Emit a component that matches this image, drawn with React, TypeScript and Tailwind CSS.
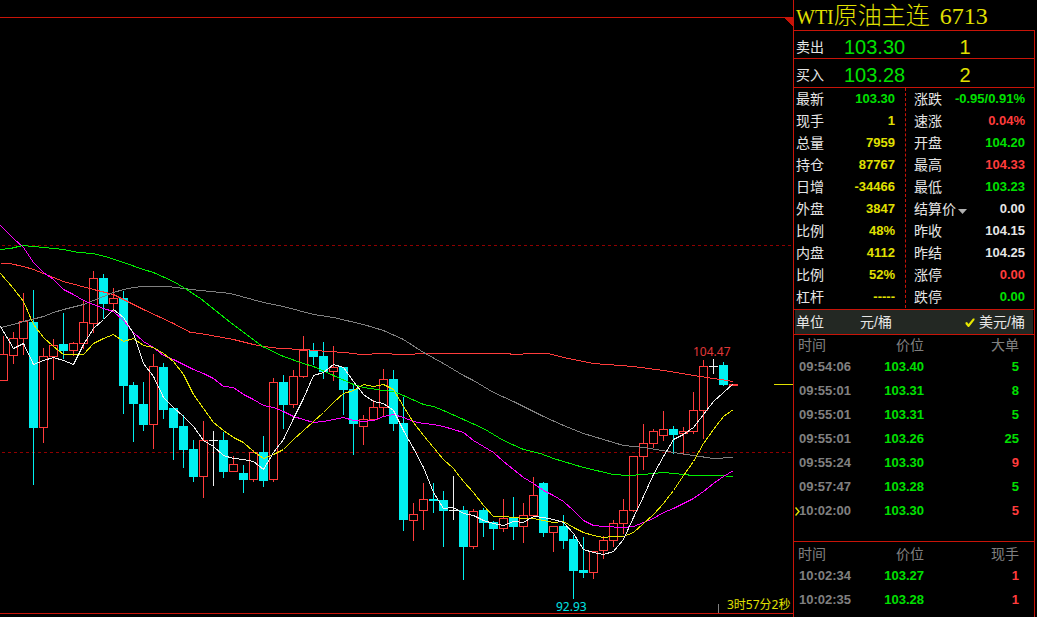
import { useState } from "react";
import clsx from "clsx";

type Tone = "up" | "down" | "flat" | "info";

type Quote = {
  label: string;
  value: string;
  tone: Tone;
  menu?: boolean;
};

type Trade = {
  time: string;
  price: string;
  volume: string;
  tone: Tone;
  marked?: boolean;
};

// [x, high, bodyTop, bodyBottom, low, kind]
type Candle = [number, number, number, number, number, "r" | "c" | "w"];

const toneClass: Record<Tone, string> = {
  up: "text-[#ff3c3c]",
  down: "text-[#00e000]",
  flat: "text-[#e6e6e6]",
  info: "text-[#e0e000]",
};

const leftQuotes: Quote[] = [
  { label: "最新", value: "103.30", tone: "down" },
  { label: "现手", value: "1", tone: "info" },
  { label: "总量", value: "7959", tone: "info" },
  { label: "持仓", value: "87767", tone: "info" },
  { label: "日增", value: "-34466", tone: "info" },
  { label: "外盘", value: "3847", tone: "info" },
  { label: "比例", value: "48%", tone: "info" },
  { label: "内盘", value: "4112", tone: "info" },
  { label: "比例", value: "52%", tone: "info" },
  { label: "杠杆", value: "-----", tone: "info" },
];

const rightQuotes: Quote[] = [
  { label: "涨跌", value: "-0.95/0.91%", tone: "down" },
  { label: "速涨", value: "0.04%", tone: "up" },
  { label: "开盘", value: "104.20", tone: "down" },
  { label: "最高", value: "104.33", tone: "up" },
  { label: "最低", value: "103.23", tone: "down" },
  { label: "结算价", value: "0.00", tone: "flat", menu: true },
  { label: "昨收", value: "104.15", tone: "flat" },
  { label: "昨结", value: "104.25", tone: "flat" },
  { label: "涨停", value: "0.00", tone: "up" },
  { label: "跌停", value: "0.00", tone: "down" },
];

const bigTrades: Trade[] = [
  { time: "09:54:06", price: "103.40", volume: "5", tone: "down" },
  { time: "09:55:01", price: "103.31", volume: "8", tone: "down" },
  { time: "09:55:01", price: "103.31", volume: "5", tone: "down" },
  { time: "09:55:01", price: "103.26", volume: "25", tone: "down" },
  { time: "09:55:24", price: "103.30", volume: "9", tone: "up" },
  { time: "09:57:47", price: "103.28", volume: "5", tone: "down" },
  { time: "10:02:00", price: "103.30", volume: "5", tone: "up", marked: true },
];

const lastTrades: Trade[] = [
  { time: "10:02:34", price: "103.27", volume: "1", tone: "up" },
  { time: "10:02:35", price: "103.28", volume: "1", tone: "up" },
];

const candles: Candle[] = [
  [3, 336, 354, 380, 380, "r"],
  [13, 332, 338, 355, 364, "r"],
  [23, 293, 321, 338, 355, "r"],
  [33, 290, 322, 428, 485, "c"],
  [43, 348, 356, 427, 443, "r"],
  [53, 339, 345, 356, 380, "r"],
  [63, 313, 344, 351, 359, "c"],
  [73, 342, 343, 350, 356, "r"],
  [83, 300, 322, 343, 349, "r"],
  [93, 271, 278, 323, 333, "r"],
  [103, 274, 278, 304, 319, "c"],
  [113, 288, 298, 303, 311, "r"],
  [123, 291, 298, 386, 414, "c"],
  [133, 382, 385, 404, 442, "c"],
  [143, 382, 404, 425, 431, "c"],
  [153, 354, 366, 424, 449, "r"],
  [163, 363, 367, 410, 419, "c"],
  [173, 408, 408, 428, 460, "c"],
  [183, 415, 426, 450, 468, "c"],
  [193, 440, 449, 477, 482, "c"],
  [203, 421, 440, 476, 498, "r"],
  [213, 431, 440, 441, 486, "w"],
  [223, 432, 440, 472, 478, "c"],
  [233, 456, 464, 471, 471, "r"],
  [243, 465, 473, 480, 493, "c"],
  [253, 450, 452, 479, 482, "r"],
  [263, 436, 452, 481, 487, "c"],
  [273, 378, 382, 479, 482, "r"],
  [283, 375, 382, 405, 429, "c"],
  [293, 370, 376, 404, 408, "r"],
  [303, 336, 350, 376, 378, "r"],
  [313, 343, 350, 357, 365, "c"],
  [323, 342, 356, 372, 379, "c"],
  [333, 346, 367, 371, 381, "r"],
  [343, 367, 367, 390, 415, "c"],
  [353, 385, 389, 424, 455, "c"],
  [363, 415, 419, 426, 445, "r"],
  [373, 400, 407, 419, 419, "r"],
  [383, 369, 379, 407, 417, "r"],
  [393, 370, 379, 424, 431, "c"],
  [403, 397, 423, 520, 531, "c"],
  [413, 503, 514, 520, 541, "r"],
  [423, 483, 499, 510, 530, "r"],
  [433, 483, 499, 501, 513, "c"],
  [443, 491, 500, 511, 547, "c"],
  [453, 476, 510, 511, 520, "w"],
  [463, 506, 510, 547, 580, "c"],
  [473, 509, 511, 546, 549, "r"],
  [483, 508, 510, 523, 537, "c"],
  [493, 521, 522, 529, 550, "c"],
  [503, 499, 518, 528, 532, "r"],
  [513, 497, 517, 527, 540, "c"],
  [523, 503, 515, 526, 543, "r"],
  [533, 477, 495, 515, 515, "r"],
  [543, 482, 483, 533, 537, "c"],
  [553, 526, 526, 532, 552, "r"],
  [563, 515, 526, 541, 549, "c"],
  [573, 535, 539, 571, 599, "c"],
  [583, 537, 570, 573, 578, "c"],
  [593, 551, 551, 572, 579, "r"],
  [603, 536, 540, 550, 559, "r"],
  [613, 520, 523, 540, 547, "r"],
  [623, 499, 510, 523, 534, "r"],
  [633, 456, 456, 510, 512, "r"],
  [643, 424, 443, 456, 470, "r"],
  [653, 429, 431, 443, 448, "r"],
  [663, 411, 429, 435, 441, "r"],
  [673, 426, 429, 435, 454, "c"],
  [683, 427, 431, 433, 455, "r"],
  [693, 392, 410, 431, 434, "r"],
  [703, 360, 366, 410, 439, "r"],
  [713, 359, 366, 367, 374, "w"],
  [723, 362, 365, 385, 386, "c"],
  [733, 384, 384, 385, 385, "r"],
];

const averages = [
  {
    color: "#ff3c3c",
    points:
      "0,263 9,263 23,266 33,269 43,273 63,281 93,289 113,294 123,299 143,309 173,323 190,332 200,333 233,339 253,344 263,346 280,348 303,349 328,351 345,352 360,354 383,353 400,354 430,353 505,353 515,354 530,353 548,353 563,357 593,363 633,366 663,370 693,375 713,378 733,381",
  },
  {
    color: "#808080",
    points:
      "0,327 13,324 23,321 43,316 53,312 63,309 83,304 93,300 103,296 113,292 123,289 133,287 143,286 168,286 183,288 200,290 230,293 263,302 283,306 313,314 333,317 363,324 383,330 403,339 423,352 443,363 463,375 473,380 493,392 513,401 543,416 563,425 583,433 603,439 623,445 643,447 673,452 693,455 713,458 733,457",
  },
  {
    color: "#00f000",
    points:
      "0,249 10,248 22,245 33,246 63,249 78,252 93,253 108,257 123,262 143,269 153,272 173,281 183,287 200,298 230,322 262,346 283,356 303,363 313,366 333,375 353,384 363,387 383,390 393,391 403,395 423,404 433,406 443,410 463,419 483,428 493,434 503,440 523,449 540,453 553,458 583,467 613,474 628,475 643,474 663,472 693,475 718,475 733,476",
  },
  {
    color: "#ff00ff",
    points:
      "0,225 13,238 23,247 33,262 43,272 53,279 63,289 73,294 83,300 93,304 103,308 113,311 123,320 133,332 143,341 153,347 163,355 173,359 183,364 193,369 203,373 213,378 223,386 233,387 243,394 253,399 263,405 273,407 283,411 293,416 303,419 313,422 323,421 333,419 343,417 353,420 363,421 373,420 383,416 393,414 403,417 413,421 423,423 433,424 443,426 453,429 463,432 473,440 483,446 493,452 503,461 513,469 523,477 533,483 543,490 553,495 563,501 573,510 583,520 593,525 603,526 623,527 633,526 643,522 653,518 663,512 673,508 683,503 693,498 703,491 713,483 723,476 733,470",
  },
  {
    color: "#e6e600",
    points:
      "0,273 13,288 23,301 33,324 43,337 53,346 63,354 83,354 93,343 103,338 113,334 123,341 133,338 143,345 153,347 163,353 173,361 183,374 193,394 203,408 213,422 223,430 233,437 243,442 253,451 263,458 273,454 283,449 293,439 303,430 313,421 323,412 333,402 343,393 353,390 363,384 373,386 383,384 393,389 403,406 413,422 423,435 433,447 443,459 453,468 463,481 473,492 483,505 493,516 503,516 513,517 523,518 533,518 543,520 553,522 563,521 573,527 583,532 593,535 603,537 613,536 623,536 633,532 643,523 653,514 663,503 673,490 683,475 693,461 703,443 713,429 723,416 733,409",
  },
  {
    color: "#f0f0f0",
    points:
      "0,326 13,348 23,343 33,364 43,360 53,357 63,360 73,364 83,344 93,328 103,319 113,309 123,317 133,333 143,363 153,376 163,397 173,407 183,416 193,426 203,440 213,446 223,455 233,458 243,459 253,461 263,469 273,452 283,439 293,418 303,398 313,375 323,372 333,364 343,367 353,381 363,394 373,401 383,403 393,410 403,430 413,448 423,467 433,492 443,508 453,507 463,513 473,515 483,520 493,523 503,525 513,521 523,522 533,516 543,517 553,519 563,522 573,533 583,549 593,552 603,554 613,551 623,539 633,517 643,496 653,474 663,456 673,439 683,434 693,427 703,414 713,401 723,392 733,383",
  },
];

const candleColor = { r: "#ff3c3c", c: "#00f0f0", w: "#f0f0f0" };

function CandleShape({ candle }: { candle: Candle }) {
  const [x, high, top, bottom, low, kind] = candle;
  const color = candleColor[kind];
  return (
    <g>
      <rect x={x} y={high} width={1} height={low - high} fill={color} />
      {kind === "r" ? (
        <rect
          x={x - 3.5}
          y={top + 0.5}
          width={8}
          height={bottom - top}
          fill="#000"
          stroke={color}
        />
      ) : (
        <rect x={x - 4} y={top} width={9} height={bottom - top} fill={color} />
      )}
    </g>
  );
}

function Chart() {
  return (
    <svg
      viewBox="0 18 793 595"
      className="block w-full overflow-visible"
      shapeRendering="crispEdges"
    >
      {/* grid */}
      <g stroke="#900000" strokeDasharray="3 3">
        <line x1="2" y1="245.5" x2="792" y2="245.5" />
        <line x1="2" y1="452.5" x2="792" y2="452.5" />
      </g>

      {candles.map((candle) => (
        <CandleShape key={candle[0]} candle={candle} />
      ))}

      {/* moving averages */}
      <g fill="none" transform="translate(0.5 0.5)">
        {averages.map((line) => (
          <polyline key={line.color} points={line.points} stroke={line.color} />
        ))}
      </g>

      <line x1="774" y1="384.5" x2="793" y2="384.5" stroke="#e0e000" />
      <line x1="718.5" y1="604" x2="718.5" y2="613" stroke="#808080" />
      <path d="M784 18h9v9z" fill="#c81408" />

      <g className="font-['Noto_Sans','Noto_Sans_CJK_SC',sans-serif] text-[12px]">
        <text x="693" y="356" fill="#e03838">
          104.47
        </text>
        <text x="556" y="611" fill="#00e6e6">
          92.93
        </text>
        <text x="727" y="609" fill="#e0e000">
          3时57分2秒
        </text>
      </g>
    </svg>
  );
}

function QuoteColumn({ quotes }: { quotes: Quote[] }) {
  return (
    <dl>
      {quotes.map((quote, i) => (
        <div key={i} className="flex h-[22px] items-center justify-between">
          <dt className="text-[#e6e6e6]">
            {quote.menu ? (
              <button type="button" className="flex items-center gap-0.5">
                {quote.label}
                <svg viewBox="0 0 9 5" className="mt-1 h-[5px] w-[9px]" fill="#b0b0b0">
                  <path d="M0 0h9L4.5 5z" />
                </svg>
              </button>
            ) : (
              quote.label
            )}
          </dt>
          <dd className={clsx("text-[13px] font-bold", toneClass[quote.tone])}>{quote.value}</dd>
        </div>
      ))}
    </dl>
  );
}

function BidAsk({ label, price, size }: { label: string; price: string; size: string }) {
  return (
    <div className="grid h-7 grid-cols-[48px_62px_1fr] items-center border-b border-[#c81408] pt-0.5 pl-0.5 text-xl last:h-[29px]">
      <span className="text-sm text-[#e6e6e6]">{label}</span>
      <span className="text-[#00e000]">{price}</span>
      <span className="pr-2.5 text-center text-[#e0e000]">{size}</span>
    </div>
  );
}

function TradeTable({ trades, volumeLabel }: { trades: Trade[]; volumeLabel: string }) {
  return (
    <table className="w-full table-fixed text-[13px] font-bold">
      <thead>
        <tr className="h-5 text-sm text-[#808080]">
          <th className="w-[70px] pl-1 text-left font-normal">时间</th>
          <th className="w-[60px] text-right font-normal">价位</th>
          <th className="pr-[15px] text-right font-normal">{volumeLabel}</th>
        </tr>
      </thead>
      <tbody>
        {trades.map((trade, i) => (
          <tr key={i} className="h-6">
            <td className="relative pl-[5px] text-[#808080]">
              {trade.marked && (
                <svg
                  viewBox="0 0 5 9"
                  className="absolute top-2 left-px h-[9px] w-[5px]"
                  fill="none"
                  stroke="#e0e000"
                  strokeWidth="1.5"
                >
                  <path d="M0.5 0.5L4 4.5L0.5 8.5" />
                </svg>
              )}
              {trade.time}
            </td>
            <td className="text-right text-[#00e000]">{trade.price}</td>
            <td className={clsx("pr-[15px] text-right", toneClass[trade.tone])}>{trade.volume}</td>
          </tr>
        ))}
      </tbody>
    </table>
  );
}

function UnitSwitch() {
  const [unit, setUnit] = useState("美元/桶");
  return (
    <div className="border-y border-[#c81408] px-px">
      <div className="flex h-6 items-center gap-9 bg-[#232823] pr-2 pl-px text-[#e6e6e6]">
        <span>单位</span>
        <div className="flex flex-1 justify-between">
          {["元/桶", "美元/桶"].map((name) => (
            <button
              key={name}
              type="button"
              aria-pressed={unit === name}
              onClick={() => setUnit(name)}
              className="flex items-center gap-1"
            >
              {unit === name && (
                <svg viewBox="0 0 10 9" className="h-[9px] w-[10px]" fill="#e6e600">
                  <path d="M0.5 4.5L2 4L3.5 6L8 0.5H9.5V2L4 9H3L0.5 6z" />
                </svg>
              )}
              {name}
            </button>
          ))}
        </div>
      </div>
    </div>
  );
}

export default function App() {
  return (
    <div className="flex min-h-screen bg-black font-['Liberation_Sans','Noto_Sans_CJK_SC',sans-serif]">
      <main className="min-w-0 flex-1">
        <div className="h-[17px]" />
        <div className="border-y border-[#c81408]">
          <Chart />
        </div>
      </main>

      <aside className="flex w-61 shrink-0 flex-col border-l border-[#c81408] pr-0.5 text-sm">
        <h1 className="flex h-[30px] items-baseline pl-0.5 text-2xl leading-8 font-light text-[#e0e000]">
          <span className="font-['Liberation_Serif',serif] text-xl">WTI</span>
          <span>原油主连</span>
          <span className="ml-2.5 font-['Liberation_Serif',serif]">6713</span>
        </h1>

        <div className="flex-1 border-t border-r border-[#c81408]">
          <div>
            <BidAsk label="卖出" price="103.30" size="1" />
            <BidAsk label="买入" price="103.28" size="2" />
          </div>

          <div className="grid grid-cols-[110px_1fr] pb-px pl-0.5">
            <div className="border-r border-dashed border-[#c81408] pr-[10px]">
              <QuoteColumn quotes={leftQuotes} />
            </div>
            <div className="pr-[9px] pl-2">
              <QuoteColumn quotes={rightQuotes} />
            </div>
          </div>

          <UnitSwitch />

          <div className="min-h-[207px] border-b border-[#c81408]">
            <TradeTable trades={bigTrades} volumeLabel="大单" />
          </div>
          <div className="pt-0.5">
            <TradeTable trades={lastTrades} volumeLabel="现手" />
          </div>
        </div>
      </aside>
    </div>
  );
}
